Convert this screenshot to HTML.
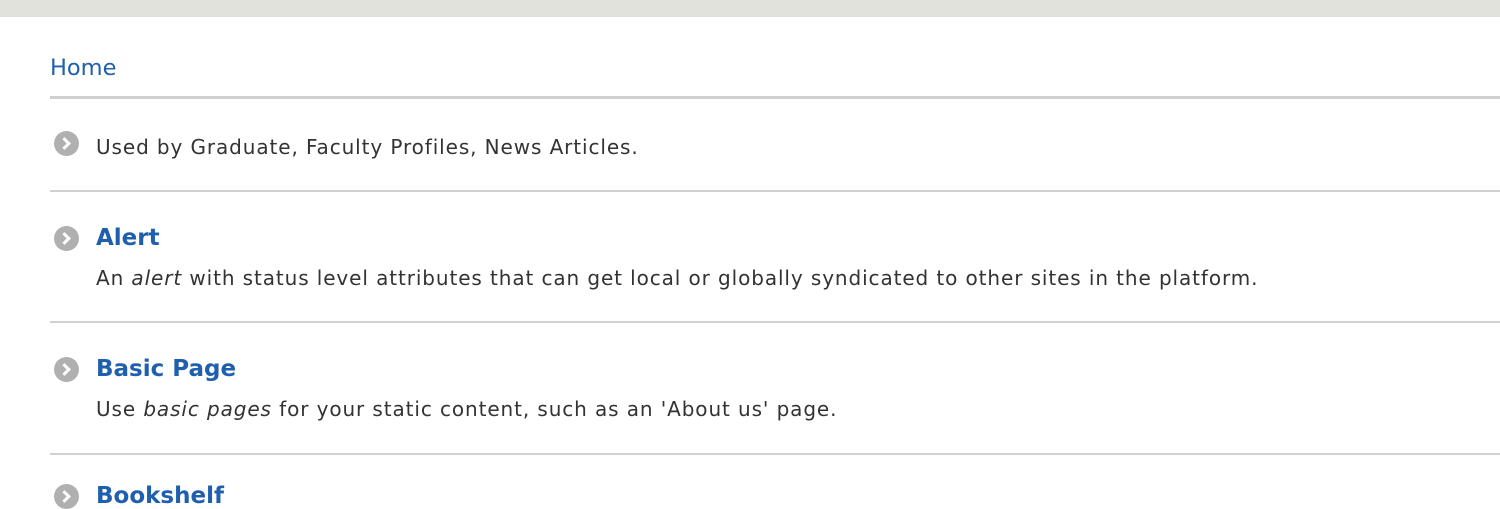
<!DOCTYPE html>
<html><head><style>
body{margin:0;width:1500px;height:500px;overflow:hidden;background:#fff;font-family:"DejaVu Sans","Liberation Sans",sans-serif;position:relative}
.bar{position:absolute;left:0;top:0;width:1500px;height:17px;background:#e2e2dd}
.t{position:absolute;white-space:nowrap;line-height:1}
.l{position:absolute;left:50px;right:0;background:#d0d0d0}
.ic{position:absolute;left:54px;width:25px;height:25px;border-radius:50%;background:#b0b0b0}
.ic:after{content:"";position:absolute;left:6px;top:8px;width:6px;height:6px;border-right:3px solid #fff;border-top:3px solid #fff;transform:rotate(45deg)}
.h{color:#1f5fad;font-weight:bold;font-size:23px}
.d{color:#333;font-size:20px;letter-spacing:0.9px}
</style></head><body>
<div class="bar"></div>
<div class="t" style="left:50px;top:57px;font-size:22.5px;color:#1f5fad">Home</div>
<div class="l" style="top:96px;height:3px"></div>
<div class="ic" style="top:131px"></div>
<div class="t d" style="left:96px;top:137px">Used by Graduate, Faculty Profiles, News Articles.</div>
<div class="l" style="top:190px;height:2px"></div>
<div class="ic" style="top:226px"></div>
<div class="t h" style="left:96px;top:227px">Alert</div>
<div class="t d" style="left:96px;top:268px">An <i>alert</i> with status level attributes that can get local or globally syndicated to other sites in the platform.</div>
<div class="l" style="top:321px;height:2px"></div>
<div class="ic" style="top:357px"></div>
<div class="t h" style="left:96px;top:358px">Basic Page</div>
<div class="t d" style="left:96px;top:399px">Use <i>basic pages</i> for your static content, such as an 'About us' page.</div>
<div class="l" style="top:453px;height:2px"></div>
<div class="ic" style="top:484px"></div>
<div class="t h" style="left:96px;top:485px">Bookshelf</div>
</body></html>
